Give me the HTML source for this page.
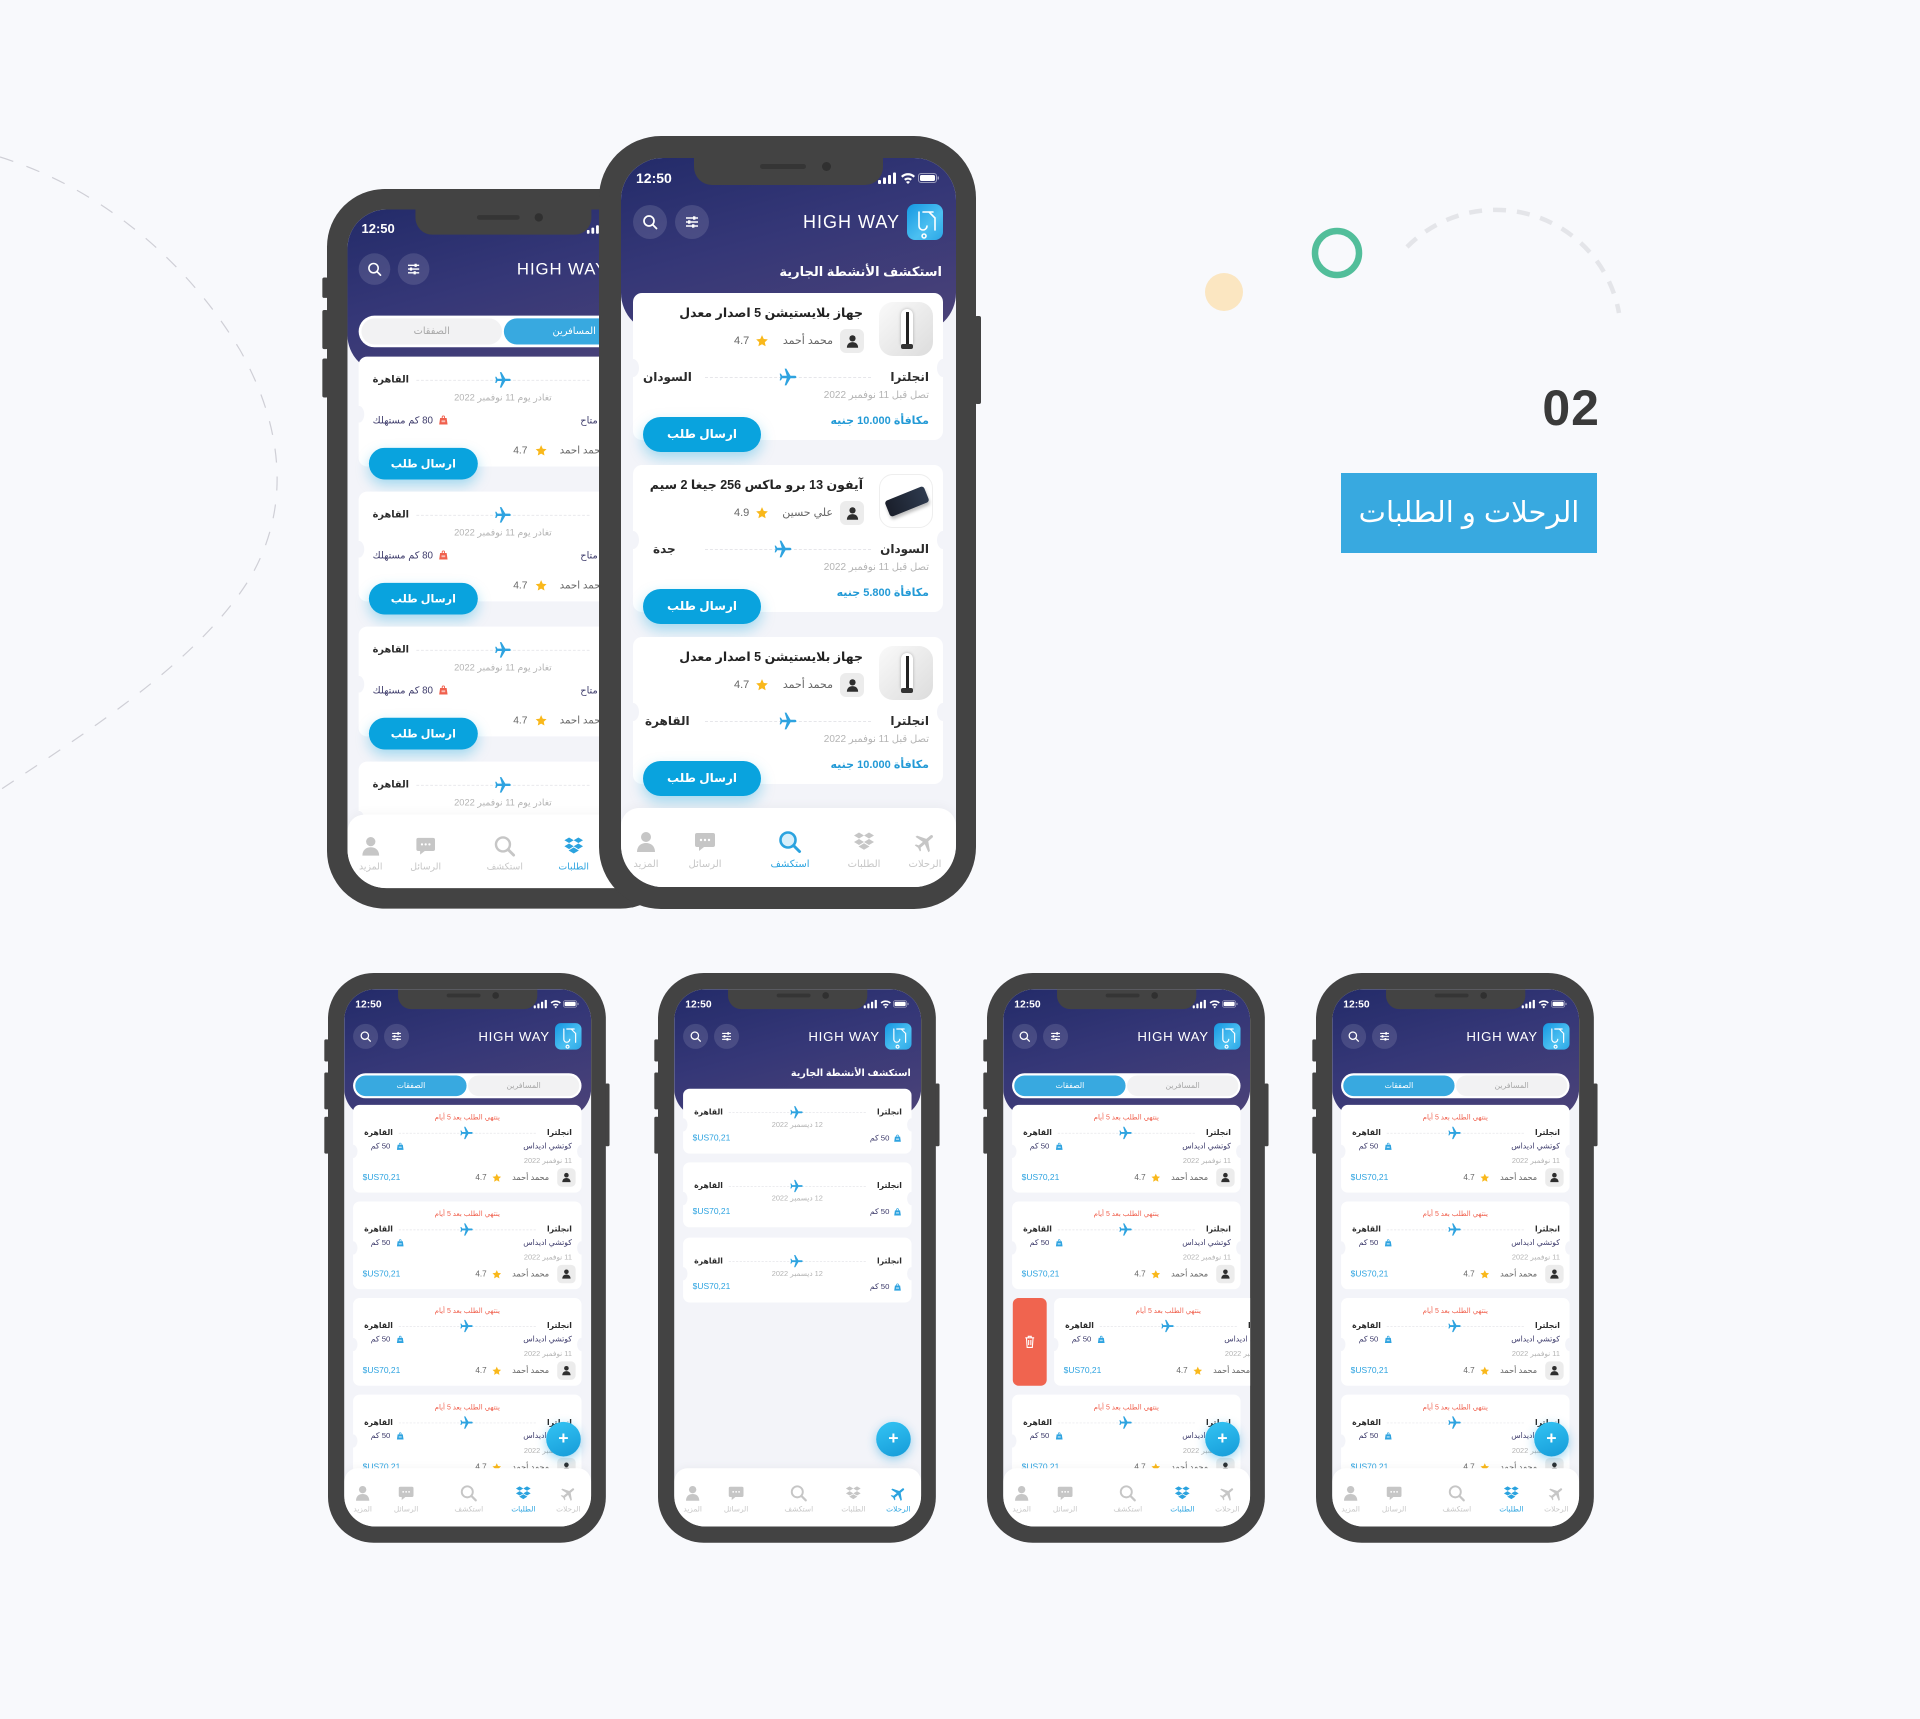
<!DOCTYPE html>
<html><head><meta charset="utf-8">
<style>
*{box-sizing:border-box}
body{margin:0;width:1920px;height:1719px;background:#f8f9fc;position:relative;overflow:hidden;font-family:"Liberation Sans","DejaVu Sans",sans-serif}
.a{position:absolute}
.ph{position:absolute;width:377px;height:773px;transform-origin:0 0}
.bd{position:absolute;inset:0;background:#434343;border-radius:62px}
.sb{position:absolute;background:#434343;border-radius:2px;width:6px}
.scr{position:absolute;left:22px;top:22px;width:335px;height:729px;border-radius:42px;overflow:hidden;background:#f3f4f9}
.hd{position:absolute;left:0;top:0;width:335px;height:175px;background:linear-gradient(165deg,#232b69 0%,#353777 45%,#4c4378 100%);border-radius:0 0 40px 40px}
.notch{position:absolute;left:73px;top:0;width:189px;height:27px;background:#434343;border-radius:0 0 18px 18px}
.notch i{position:absolute;left:66px;top:6px;width:46px;height:5px;border-radius:3px;background:#353535}
.notch b{position:absolute;left:128px;top:4px;width:9px;height:9px;border-radius:50%;background:#303030}
.tm{position:absolute;left:15px;top:12px;color:#fff;font-weight:bold;font-size:14px;line-height:16px}
.stb{position:absolute;left:257px;top:13px;width:62px;height:14px}
.cir{position:absolute;top:47px;width:34px;height:34px;border-radius:50%;background:rgba(255,255,255,.12)}
.cir svg{position:absolute;left:9px;top:9px;width:16px;height:16px}
.hw{position:absolute;right:56px;top:54px;color:#fff;font-size:18px;letter-spacing:1px;line-height:20px;font-weight:500}
.logo{position:absolute;left:286px;top:46px;width:36px;height:36px;border-radius:8px;background:linear-gradient(135deg,#1597e2,#4cc0f1 60%,#2aa6e6)}
.sub{position:absolute;right:14px;top:106px;color:#fff;font-weight:bold;font-size:13px;line-height:16px;direction:rtl}
.cd{position:absolute;left:12px;width:310px;background:#fff;border-radius:9px}
.cd:before,.cd:after{content:"";position:absolute;top:45%;width:12px;height:18px;border-radius:50%;background:#f3f4f9}
.cd:before{left:-6px}.cd:after{right:-6px}
.t{position:absolute;line-height:14px;white-space:nowrap;direction:rtl}
.tt{font-size:12.5px;color:#222;font-weight:bold}
.n{font-size:11px;color:#666}
.b2{font-size:12px;color:#2b2b2b;font-weight:bold}
.b{font-size:10.5px;color:#2b2b2b;font-weight:bold}
.g{font-size:10px;color:#b4b4b4}
.rw{font-size:11px;color:#239ad6;font-weight:bold}
.pu{font-size:10.5px;color:#3d3b6b}
.red{font-size:9.5px;color:#f0604d}
.bl{font-size:11.5px;color:#2da3e0;direction:ltr}
.dl{position:absolute;left:62px;right:62px;border-top:1.5px dashed #e6e6ea}
.pl{position:absolute;width:20px;height:20px;fill:#2ea3e0}
.st{position:absolute;width:14px;height:14px;fill:#f9b81b}
.av{position:absolute;width:25px;height:25px;border-radius:6px;background:#ececec}
.av svg{position:absolute;left:5px;top:5px;width:15px;height:15px;fill:#2e2e2e}
.bag{position:absolute;width:12px;height:12px}
.sbtn{position:absolute;border-radius:18px;background:#09a3de;color:#fff;font-weight:bold;font-size:12px;text-align:center;direction:rtl;box-shadow:0 6px 14px rgba(9,163,222,.35)}
.img{position:absolute;left:246px;top:9px;width:54px;height:54px;border-radius:14px;overflow:hidden}
.tabs{position:absolute;left:12px;top:114px;width:310px;height:34px;background:#fff;border-radius:18px}
.tp{position:absolute;top:3px;height:28px;width:151px;border-radius:15px;text-align:center;line-height:28px;font-size:10.5px;direction:rtl}
.nv{position:absolute;left:0;top:650px;width:335px;height:79px;background:#fff;border-radius:18px 18px 0 0;box-shadow:0 -3px 10px rgba(0,0,0,.03)}
.ni{position:absolute;top:22px;width:60px;margin-left:-30px;text-align:center;color:#c6c6c6;font-size:10px;line-height:12px;direction:rtl}
.ni svg{display:block;margin:0 auto 5px;width:24px;height:24px;fill:currentColor}
.ni.on{color:#2ba3df}
.fab{position:absolute;left:274px;top:587px;width:47px;height:47px;border-radius:50%;background:linear-gradient(160deg,#34c4f4,#159bd8);color:#fff;font-size:24px;font-weight:bold;text-align:center;line-height:46px;box-shadow:0 4px 14px rgba(30,160,220,.45)}
</style></head><body>

<svg width="0" height="0" style="position:absolute">
<defs>
<symbol id="pl" viewBox="0 0 24 24"><path d="M22 12c0-.8-.7-1.5-1.5-1.5H15L10 2H8l2.5 8.5H5L3.5 8H2l1 4-1 4h1.5L5 13.5h5.5L8 22h2l5-8.5h5.5c.8 0 1.5-.7 1.5-1.5z"/></symbol>
<symbol id="st" viewBox="0 0 24 24"><path d="M12 2l3 6.5 7 .8-5.2 4.8 1.4 7L12 17.6 5.8 21.1l1.4-7L2 9.3l7-.8z"/></symbol>
<symbol id="pr" viewBox="0 0 24 24"><circle cx="12" cy="7" r="5"/><path d="M3 22c0-6 4-9 9-9s9 3 9 9z"/></symbol>
<symbol id="ch" viewBox="0 0 24 24"><path d="M4 3h16a2 2 0 0 1 2 2v10a2 2 0 0 1-2 2h-9l-5 4v-4H4a2 2 0 0 1-2-2V5a2 2 0 0 1 2-2z"/><circle cx="8" cy="10" r="1.2" fill="#fff"/><circle cx="12" cy="10" r="1.2" fill="#fff"/><circle cx="16" cy="10" r="1.2" fill="#fff"/></symbol>
<symbol id="se" viewBox="0 0 24 24"><circle cx="10" cy="10" r="7.5" fill="none" stroke="currentColor" stroke-width="2.6"/><path d="M15.5 15.5l6 6" stroke="currentColor" stroke-width="3" stroke-linecap="round"/></symbol>
<symbol id="seA" viewBox="0 0 24 24"><circle cx="10" cy="10" r="7.5" fill="#d8effa" stroke="currentColor" stroke-width="2.6"/><path d="M15.5 15.5l6 6" stroke="currentColor" stroke-width="3" stroke-linecap="round"/></symbol>
<symbol id="bx" viewBox="0 0 24 24"><path d="M7 2.5l5 3-5 3-5-3zM17 2.5l5 3-5 3-5-3zM7 9l5 3-5 3-5-3zM17 9l5 3-5 3-5-3zM6.5 16.5l5.5 3.3 5.5-3.3-5.5-3.3z"/></symbol>
<symbol id="ap" viewBox="0 0 24 24"><g transform="rotate(-40 12 12)"><path d="M22 12c0-.8-.7-1.5-1.5-1.5H15L10 2H8l2.5 8.5H5L3.5 8H2l1 4-1 4h1.5L5 13.5h5.5L8 22h2l5-8.5h5.5c.8 0 1.5-.7 1.5-1.5z"/></g></symbol>
<symbol id="bg" viewBox="0 0 24 24"><path d="M8.5 8V6a3.5 3.5 0 0 1 7 0v2h-2V6a1.5 1.5 0 0 0-3 0v2z"/><path d="M5 8h14l2 14H3z"/><rect x="8" y="13" width="8" height="4" fill="#fff" opacity=".6"/></symbol>
<symbol id="sbar" viewBox="0 0 62 14"><rect x="0" y="9" width="3" height="4" rx="1" fill="#fff"/><rect x="5" y="6.5" width="3" height="6.5" rx="1" fill="#fff"/><rect x="10" y="4" width="3" height="9" rx="1" fill="#fff"/><rect x="15" y="1.5" width="3" height="11.5" rx="1" fill="#fff"/><path d="M23 5a10 10 0 0 1 14 0l-1.6 1.6a7.8 7.8 0 0 0-10.8 0zM26 8a6 6 0 0 1 8 0l-1.6 1.6a3.6 3.6 0 0 0-4.8 0zM30 13l-2-2a2.8 2.8 0 0 1 4 0z" fill="#fff"/><rect x="40.5" y="2.5" width="18" height="9" rx="2.5" fill="none" stroke="#fff" stroke-opacity=".5"/><rect x="42" y="4" width="15" height="6" rx="1.5" fill="#fff"/><rect x="59.5" y="5.5" width="1.5" height="3" fill="#fff" opacity=".5"/></symbol>
<symbol id="srch" viewBox="0 0 16 16"><circle cx="7" cy="7" r="5" fill="none" stroke="#fff" stroke-width="1.7"/><path d="M11 11l3.5 3.5" stroke="#fff" stroke-width="1.8" stroke-linecap="round"/></symbol>
<symbol id="flt" viewBox="0 0 16 16"><path d="M2 4h12M2 8h12M2 12h12" stroke="#fff" stroke-width="1.5"/><rect x="9" y="2.3" width="2.4" height="3.4" fill="#fff"/><rect x="4" y="6.3" width="2.4" height="3.4" fill="#fff"/><rect x="8" y="10.3" width="2.4" height="3.4" fill="#fff"/></symbol>
<symbol id="lg" viewBox="0 0 36 36"><path d="M12 8v14a4 4 0 0 0 8 0M16 8h10M22 8l6 6v12M17 30a2 2 0 1 0 0.1 0" fill="none" stroke="#fff" stroke-width="1.6" stroke-linecap="round"/></symbol>
</defs></svg>

<svg class="a" style="left:0;top:0" width="1920" height="1719">
<path d="M0 157 C90 185 180 250 240 350 C285 430 290 510 250 578 C200 660 90 730 0 790" fill="none" stroke="#cfcfd6" stroke-width="1.2" stroke-dasharray="14 14"/>
<path d="M1407 247 A125 125 0 0 1 1619 313" fill="none" stroke="#e4e5e9" stroke-width="4.5" stroke-dasharray="13 11"/>
<circle cx="1337" cy="253" r="22" fill="none" stroke="#52be9a" stroke-width="6.5"/>
<circle cx="1224" cy="292" r="19" fill="#fbe6c1"/>
</svg>
<div class="a" style="right:320px;top:378px;font-size:50px;color:#3a3a3a;line-height:60px;font-weight:bold;letter-spacing:1px">02</div>
<div class="a" style="left:1341px;top:473px;width:256px;height:80px;background:#38a9e0;color:#fff;font-size:29px;text-align:center;line-height:80px;direction:rtl">الرحلات و الطلبات</div>

<!-- BACK PHONE -->
<div class="ph" style="left:327px;top:189px;transform:scale(0.931)">
<div class="sb" style="left:-5px;top:95px;height:22px"></div>
<div class="sb" style="left:-5px;top:130px;height:42px"></div>
<div class="sb" style="left:-5px;top:182px;height:42px"></div>
<div class="bd"></div>
<div class="scr">
 <div class="hd"></div>
 <div class="tm">12:50</div>
 <svg class="stb"><use href="#sbar"/></svg>
 <div class="cir" style="left:12px"><svg><use href="#srch"/></svg></div>
 <div class="cir" style="left:54px"><svg><use href="#flt"/></svg></div>
 <div class="hw">HIGH WAY</div>
 <div class="logo"><svg width="36" height="36"><use href="#lg"/></svg></div>
 <div class="tabs"><div class="tp" style="left:3px;background:#f2f2f3;color:#a8a8a8">الصفقات</div><div class="tp" style="right:3px;background:#38a9e0;color:#fff">المسافرين</div></div>

 <div class="cd" style="top:158px;height:118px">
  <div class="dl" style="top:25px"></div>
  <div class="t b" style="right:14px;top:18px">انجلترا</div><div class="t b" style="left:15px;top:18px">القاهرة</div>
  <svg class="pl" style="left:145px;top:15px"><use href="#pl"/></svg>
  <div class="t g" style="left:0;right:0;text-align:center;top:38px">تغادر يوم 11 نوفمبر 2022</div>
  <div class="t pu" style="left:15px;top:62px">80 كم مستهلك</div><svg class="bag" style="left:85px;top:62px;fill:#f0604d"><use href="#bg"/></svg>
  <div class="t pu" style="right:14px;top:62px">نوع منتج متاح</div>
  <div class="av" style="right:8px;top:88px"><svg><use href="#pr"/></svg></div>
  <div class="t n" style="right:44px;top:94px">محمد احمد</div>
  <svg class="st" style="left:189px;top:94px"><use href="#st"/></svg><div class="t n" style="left:166px;top:94px">4.7</div>
  <div class="sbtn" style="left:11px;top:98px;width:117px;height:34px;line-height:34px">ارسال طلب</div>
 </div>
 <div class="cd" style="top:303px;height:118px">
  <div class="dl" style="top:25px"></div>
  <div class="t b" style="right:14px;top:18px">انجلترا</div><div class="t b" style="left:15px;top:18px">القاهرة</div>
  <svg class="pl" style="left:145px;top:15px"><use href="#pl"/></svg>
  <div class="t g" style="left:0;right:0;text-align:center;top:38px">تغادر يوم 11 نوفمبر 2022</div>
  <div class="t pu" style="left:15px;top:62px">80 كم مستهلك</div><svg class="bag" style="left:85px;top:62px;fill:#f0604d"><use href="#bg"/></svg>
  <div class="t pu" style="right:14px;top:62px">نوع منتج متاح</div>
  <div class="av" style="right:8px;top:88px"><svg><use href="#pr"/></svg></div>
  <div class="t n" style="right:44px;top:94px">محمد احمد</div>
  <svg class="st" style="left:189px;top:94px"><use href="#st"/></svg><div class="t n" style="left:166px;top:94px">4.7</div>
  <div class="sbtn" style="left:11px;top:98px;width:117px;height:34px;line-height:34px">ارسال طلب</div>
 </div>
 <div class="cd" style="top:448px;height:118px">
  <div class="dl" style="top:25px"></div>
  <div class="t b" style="right:14px;top:18px">انجلترا</div><div class="t b" style="left:15px;top:18px">القاهرة</div>
  <svg class="pl" style="left:145px;top:15px"><use href="#pl"/></svg>
  <div class="t g" style="left:0;right:0;text-align:center;top:38px">تغادر يوم 11 نوفمبر 2022</div>
  <div class="t pu" style="left:15px;top:62px">80 كم مستهلك</div><svg class="bag" style="left:85px;top:62px;fill:#f0604d"><use href="#bg"/></svg>
  <div class="t pu" style="right:14px;top:62px">نوع منتج متاح</div>
  <div class="av" style="right:8px;top:88px"><svg><use href="#pr"/></svg></div>
  <div class="t n" style="right:44px;top:94px">محمد احمد</div>
  <svg class="st" style="left:189px;top:94px"><use href="#st"/></svg><div class="t n" style="left:166px;top:94px">4.7</div>
  <div class="sbtn" style="left:11px;top:98px;width:117px;height:34px;line-height:34px">ارسال طلب</div>
 </div>
 <div class="cd" style="top:593px;height:118px">
  <div class="dl" style="top:25px"></div>
  <div class="t b" style="right:14px;top:18px">انجلترا</div><div class="t b" style="left:15px;top:18px">القاهرة</div>
  <svg class="pl" style="left:145px;top:15px"><use href="#pl"/></svg>
  <div class="t g" style="left:0;right:0;text-align:center;top:38px">تغادر يوم 11 نوفمبر 2022</div>
 </div>
 <div class="nv">
  <div class="ni" style="left:25px"><svg><use href="#pr"/></svg>المزيد</div>
  <div class="ni" style="left:84px"><svg><use href="#ch"/></svg>الرسائل</div>
  <div class="ni" style="left:169px"><svg><use href="#se"/></svg>استكشف</div>
  <div class="ni on" style="left:243px"><svg><use href="#bx"/></svg>الطلبات</div>
  <div class="ni" style="left:304px"><svg><use href="#ap"/></svg>الرحلات</div>
 </div>
 <div class="notch"><i></i><b></b></div>
</div>
</div>

<!-- FRONT PHONE -->
<div class="ph" style="left:599px;top:136px">
<div class="sb" style="left:376px;top:180px;height:88px"></div>
<div class="bd"></div>
<div class="scr">
 <div class="hd"></div>
 <div class="tm">12:50</div>
 <svg class="stb"><use href="#sbar"/></svg>
 <div class="cir" style="left:12px"><svg><use href="#srch"/></svg></div>
 <div class="cir" style="left:54px"><svg><use href="#flt"/></svg></div>
 <div class="hw">HIGH WAY</div>
 <div class="logo"><svg width="36" height="36"><use href="#lg"/></svg></div>
 <div class="sub">استكشف الأنشطة الجارية</div>

 <div class="cd" style="top:135px;height:147px">
  <div class="img" style="background:linear-gradient(135deg,#fafafa,#dcdcdc)"><div class="a" style="left:22px;top:7px;width:12px;height:36px;background:#fff;border-radius:7px 7px 2px 2px;box-shadow:0 0 3px rgba(0,0,0,.25)"></div><div class="a" style="left:27px;top:10px;width:2.5px;height:32px;background:#222"></div><div class="a" style="left:22px;top:42px;width:12px;height:5px;background:#333;border-radius:2px"></div></div>
  <div class="t tt" style="right:80px;top:13px">جهاز بلايستيشن 5 اصدار معدل</div>
  <div class="av" style="left:207px;top:36px;width:24px;height:24px"><svg><use href="#pr"/></svg></div>
  <div class="t n" style="right:110px;top:41px">محمد أحمد</div>
  <svg class="st" style="left:122px;top:41px"><use href="#st"/></svg><div class="t n" style="left:101px;top:41px">4.7</div>
  <div class="dl" style="top:84px;left:72px;right:72px"></div>
  <div class="t b2" style="right:14px;top:77px">انجلترا</div><div class="t b2" style="left:10px;top:77px">السودان</div>
  <svg class="pl" style="left:145px;top:74px"><use href="#pl"/></svg>
  <div class="t g" style="right:14px;top:96px">تصل قبل 11 نوفمبر 2022</div>
  <div class="t rw" style="right:14px;top:121px">مكافأة 10.000 جنيه</div>
  <div class="sbtn" style="left:10px;top:124px;width:118px;height:35px;line-height:35px">ارسال طلب</div>
 </div>
 <div class="cd" style="top:307px;height:147px">
  <div class="img" style="background:#fff;border:1px solid #eee"><div class="a" style="left:6px;top:18px;width:42px;height:17px;background:linear-gradient(90deg,#1a1f2b,#2e3a4e);border-radius:3px;transform:rotate(-22deg);box-shadow:0 3px 3px rgba(0,0,0,.25)"></div></div>
  <div class="t tt" style="right:80px;top:13px">آيفون 13 برو ماكس 256 جيغا 2 سيم</div>
  <div class="av" style="left:207px;top:36px;width:24px;height:24px"><svg><use href="#pr"/></svg></div>
  <div class="t n" style="right:110px;top:41px">علي حسين</div>
  <svg class="st" style="left:122px;top:41px"><use href="#st"/></svg><div class="t n" style="left:101px;top:41px">4.9</div>
  <div class="dl" style="top:84px;left:72px;right:72px"></div>
  <div class="t b2" style="right:14px;top:77px">السودان</div><div class="t b2" style="left:20px;top:77px">جدة</div>
  <svg class="pl" style="left:140px;top:74px"><use href="#pl"/></svg>
  <div class="t g" style="right:14px;top:96px">تصل قبل 11 نوفمبر 2022</div>
  <div class="t rw" style="right:14px;top:121px">مكافأة 5.800 جنيه</div>
  <div class="sbtn" style="left:10px;top:124px;width:118px;height:35px;line-height:35px">ارسال طلب</div>
 </div>
 <div class="cd" style="top:479px;height:147px">
  <div class="img" style="background:linear-gradient(135deg,#fafafa,#dcdcdc)"><div class="a" style="left:22px;top:7px;width:12px;height:36px;background:#fff;border-radius:7px 7px 2px 2px;box-shadow:0 0 3px rgba(0,0,0,.25)"></div><div class="a" style="left:27px;top:10px;width:2.5px;height:32px;background:#222"></div><div class="a" style="left:22px;top:42px;width:12px;height:5px;background:#333;border-radius:2px"></div></div>
  <div class="t tt" style="right:80px;top:13px">جهاز بلايستيشن 5 اصدار معدل</div>
  <div class="av" style="left:207px;top:36px;width:24px;height:24px"><svg><use href="#pr"/></svg></div>
  <div class="t n" style="right:110px;top:41px">محمد أحمد</div>
  <svg class="st" style="left:122px;top:41px"><use href="#st"/></svg><div class="t n" style="left:101px;top:41px">4.7</div>
  <div class="dl" style="top:84px;left:72px;right:72px"></div>
  <div class="t b2" style="right:14px;top:77px">انجلترا</div><div class="t b2" style="left:12px;top:77px">القاهرة</div>
  <svg class="pl" style="left:145px;top:74px"><use href="#pl"/></svg>
  <div class="t g" style="right:14px;top:96px">تصل قبل 11 نوفمبر 2022</div>
  <div class="t rw" style="right:14px;top:121px">مكافأة 10.000 جنيه</div>
  <div class="sbtn" style="left:10px;top:124px;width:118px;height:35px;line-height:35px">ارسال طلب</div>
 </div>
 <div class="nv">
  <div class="ni" style="left:25px"><svg><use href="#pr"/></svg>المزيد</div>
  <div class="ni" style="left:84px"><svg><use href="#ch"/></svg>الرسائل</div>
  <div class="ni on" style="left:169px"><svg><use href="#seA"/></svg>استكشف</div>
  <div class="ni" style="left:243px"><svg><use href="#bx"/></svg>الطلبات</div>
  <div class="ni" style="left:304px"><svg><use href="#ap"/></svg>الرحلات</div>
 </div>
 <div class="notch"><i></i><b></b></div>
</div>
</div>

<!-- SMALL PHONE 1 -->
<div class="ph" style="left:328px;top:973px;transform:scale(0.737)">
<div class="sb" style="left:-5px;top:90px;height:30px"></div><div class="sb" style="left:-5px;top:135px;height:50px"></div><div class="sb" style="left:-5px;top:195px;height:50px"></div><div class="sb" style="left:376px;top:150px;height:85px"></div>
<div class="bd"></div>
<div class="scr">
 <div class="hd"></div>
 <div class="tm">12:50</div><svg class="stb"><use href="#sbar"/></svg>
 <div class="cir" style="left:12px"><svg><use href="#srch"/></svg></div><div class="cir" style="left:54px"><svg><use href="#flt"/></svg></div>
 <div class="hw">HIGH WAY</div><div class="logo"><svg width="36" height="36"><use href="#lg"/></svg></div>
 <div class="tabs"><div class="tp" style="left:3px;background:#38a9e0;color:#fff">الصفقات</div><div class="tp" style="right:3px;background:#f2f2f3;color:#a8a8a8">المسافرين</div></div>
 <div class="cd" style="top:157px;height:119px"><div class="t red" style="left:0;right:0;text-align:center;top:11px">ينتهي الطلب بعد 5 أيام</div><div class="dl" style="top:38px"></div><div class="t b" style="right:13px;top:31px">انجلترا</div><div class="t b" style="left:15px;top:31px">القاهرة</div><svg class="pl" style="left:144px;top:28px"><use href="#pl"/></svg><div class="t pu" style="right:13px;top:49px">كوتشي اديداس</div><div class="t pu" style="left:24px;top:49px">50 كم</div><svg class="bag" style="left:58px;top:50px;fill:#2ea3e0"><use href="#bg"/></svg><div class="t g" style="right:13px;top:70px">11 نوفمبر 2022</div><div class="t bl" style="left:13px;top:92px">$US70,21</div><div class="av" style="right:8px;top:86px"><svg><use href="#pr"/></svg></div><div class="t n" style="right:44px;top:92px">محمد أحمد</div><svg class="st" style="left:188px;top:92px"><use href="#st"/></svg><div class="t n" style="left:166px;top:92px">4.7</div></div>
 <div class="cd" style="top:288px;height:119px"><div class="t red" style="left:0;right:0;text-align:center;top:11px">ينتهي الطلب بعد 5 أيام</div><div class="dl" style="top:38px"></div><div class="t b" style="right:13px;top:31px">انجلترا</div><div class="t b" style="left:15px;top:31px">القاهرة</div><svg class="pl" style="left:144px;top:28px"><use href="#pl"/></svg><div class="t pu" style="right:13px;top:49px">كوتشي اديداس</div><div class="t pu" style="left:24px;top:49px">50 كم</div><svg class="bag" style="left:58px;top:50px;fill:#2ea3e0"><use href="#bg"/></svg><div class="t g" style="right:13px;top:70px">11 نوفمبر 2022</div><div class="t bl" style="left:13px;top:92px">$US70,21</div><div class="av" style="right:8px;top:86px"><svg><use href="#pr"/></svg></div><div class="t n" style="right:44px;top:92px">محمد أحمد</div><svg class="st" style="left:188px;top:92px"><use href="#st"/></svg><div class="t n" style="left:166px;top:92px">4.7</div></div>
 <div class="cd" style="top:419px;height:119px"><div class="t red" style="left:0;right:0;text-align:center;top:11px">ينتهي الطلب بعد 5 أيام</div><div class="dl" style="top:38px"></div><div class="t b" style="right:13px;top:31px">انجلترا</div><div class="t b" style="left:15px;top:31px">القاهرة</div><svg class="pl" style="left:144px;top:28px"><use href="#pl"/></svg><div class="t pu" style="right:13px;top:49px">كوتشي اديداس</div><div class="t pu" style="left:24px;top:49px">50 كم</div><svg class="bag" style="left:58px;top:50px;fill:#2ea3e0"><use href="#bg"/></svg><div class="t g" style="right:13px;top:70px">11 نوفمبر 2022</div><div class="t bl" style="left:13px;top:92px">$US70,21</div><div class="av" style="right:8px;top:86px"><svg><use href="#pr"/></svg></div><div class="t n" style="right:44px;top:92px">محمد أحمد</div><svg class="st" style="left:188px;top:92px"><use href="#st"/></svg><div class="t n" style="left:166px;top:92px">4.7</div></div>
 <div class="cd" style="top:550px;height:119px"><div class="t red" style="left:0;right:0;text-align:center;top:11px">ينتهي الطلب بعد 5 أيام</div><div class="dl" style="top:38px"></div><div class="t b" style="right:13px;top:31px">انجلترا</div><div class="t b" style="left:15px;top:31px">القاهرة</div><svg class="pl" style="left:144px;top:28px"><use href="#pl"/></svg><div class="t pu" style="right:13px;top:49px">كوتشي اديداس</div><div class="t pu" style="left:24px;top:49px">50 كم</div><svg class="bag" style="left:58px;top:50px;fill:#2ea3e0"><use href="#bg"/></svg><div class="t g" style="right:13px;top:70px">11 نوفمبر 2022</div><div class="t bl" style="left:13px;top:92px">$US70,21</div><div class="av" style="right:8px;top:86px"><svg><use href="#pr"/></svg></div><div class="t n" style="right:44px;top:92px">محمد أحمد</div><svg class="st" style="left:188px;top:92px"><use href="#st"/></svg><div class="t n" style="left:166px;top:92px">4.7</div></div>
 <div class="fab">+</div>
 <div class="nv"><div class="ni" style="left:25px"><svg><use href="#pr"/></svg>المزيد</div><div class="ni" style="left:84px"><svg><use href="#ch"/></svg>الرسائل</div><div class="ni" style="left:169px"><svg><use href="#se"/></svg>استكشف</div><div class="ni on" style="left:243px"><svg><use href="#bx"/></svg>الطلبات</div><div class="ni" style="left:304px"><svg><use href="#ap"/></svg>الرحلات</div></div>
 <div class="notch"><i></i><b></b></div>
</div></div>

<!-- SMALL PHONE 2 -->
<div class="ph" style="left:658px;top:973px;transform:scale(0.737)">
<div class="sb" style="left:-5px;top:90px;height:30px"></div><div class="sb" style="left:-5px;top:135px;height:50px"></div><div class="sb" style="left:-5px;top:195px;height:50px"></div><div class="sb" style="left:376px;top:150px;height:85px"></div>
<div class="bd"></div>
<div class="scr">
 <div class="hd"></div>
 <div class="tm">12:50</div><svg class="stb"><use href="#sbar"/></svg>
 <div class="cir" style="left:12px"><svg><use href="#srch"/></svg></div><div class="cir" style="left:54px"><svg><use href="#flt"/></svg></div>
 <div class="hw">HIGH WAY</div><div class="logo"><svg width="36" height="36"><use href="#lg"/></svg></div>
 <div class="sub">استكشف الأنشطة الجارية</div>
 <div class="cd" style="top:135px;height:88px"><div class="dl" style="top:32px"></div><div class="t b" style="right:13px;top:25px">انجلترا</div><div class="t b" style="left:15px;top:25px">القاهرة</div><svg class="pl" style="left:144px;top:22px"><use href="#pl"/></svg><div class="t g" style="left:0;right:0;text-align:center;top:43px">12 ديسمبر 2022</div><div class="t bl" style="left:13px;top:60px">$US70,21</div><svg class="bag" style="right:13px;top:61px;fill:#2ea3e0"><use href="#bg"/></svg><div class="t pu" style="right:30px;top:60px">50 كم</div></div>
 <div class="cd" style="top:235px;height:88px"><div class="dl" style="top:32px"></div><div class="t b" style="right:13px;top:25px">انجلترا</div><div class="t b" style="left:15px;top:25px">القاهرة</div><svg class="pl" style="left:144px;top:22px"><use href="#pl"/></svg><div class="t g" style="left:0;right:0;text-align:center;top:43px">12 ديسمبر 2022</div><div class="t bl" style="left:13px;top:60px">$US70,21</div><svg class="bag" style="right:13px;top:61px;fill:#2ea3e0"><use href="#bg"/></svg><div class="t pu" style="right:30px;top:60px">50 كم</div></div>
 <div class="cd" style="top:337px;height:88px"><div class="dl" style="top:32px"></div><div class="t b" style="right:13px;top:25px">انجلترا</div><div class="t b" style="left:15px;top:25px">القاهرة</div><svg class="pl" style="left:144px;top:22px"><use href="#pl"/></svg><div class="t g" style="left:0;right:0;text-align:center;top:43px">12 ديسمبر 2022</div><div class="t bl" style="left:13px;top:60px">$US70,21</div><svg class="bag" style="right:13px;top:61px;fill:#2ea3e0"><use href="#bg"/></svg><div class="t pu" style="right:30px;top:60px">50 كم</div></div>
 <div class="fab">+</div>
 <div class="nv"><div class="ni" style="left:25px"><svg><use href="#pr"/></svg>المزيد</div><div class="ni" style="left:84px"><svg><use href="#ch"/></svg>الرسائل</div><div class="ni" style="left:169px"><svg><use href="#se"/></svg>استكشف</div><div class="ni" style="left:243px"><svg><use href="#bx"/></svg>الطلبات</div><div class="ni on" style="left:304px"><svg><use href="#ap"/></svg>الرحلات</div></div>
 <div class="notch"><i></i><b></b></div>
</div></div>

<!-- SMALL PHONE 3 -->
<div class="ph" style="left:987px;top:973px;transform:scale(0.737)">
<div class="sb" style="left:-5px;top:90px;height:30px"></div><div class="sb" style="left:-5px;top:135px;height:50px"></div><div class="sb" style="left:-5px;top:195px;height:50px"></div><div class="sb" style="left:376px;top:150px;height:85px"></div>
<div class="bd"></div>
<div class="scr">
 <div class="hd"></div>
 <div class="tm">12:50</div><svg class="stb"><use href="#sbar"/></svg>
 <div class="cir" style="left:12px"><svg><use href="#srch"/></svg></div><div class="cir" style="left:54px"><svg><use href="#flt"/></svg></div>
 <div class="hw">HIGH WAY</div><div class="logo"><svg width="36" height="36"><use href="#lg"/></svg></div>
 <div class="tabs"><div class="tp" style="left:3px;background:#38a9e0;color:#fff">الصفقات</div><div class="tp" style="right:3px;background:#f2f2f3;color:#a8a8a8">المسافرين</div></div>
 <div class="cd" style="top:157px;height:119px"><div class="t red" style="left:0;right:0;text-align:center;top:11px">ينتهي الطلب بعد 5 أيام</div><div class="dl" style="top:38px"></div><div class="t b" style="right:13px;top:31px">انجلترا</div><div class="t b" style="left:15px;top:31px">القاهرة</div><svg class="pl" style="left:144px;top:28px"><use href="#pl"/></svg><div class="t pu" style="right:13px;top:49px">كوتشي اديداس</div><div class="t pu" style="left:24px;top:49px">50 كم</div><svg class="bag" style="left:58px;top:50px;fill:#2ea3e0"><use href="#bg"/></svg><div class="t g" style="right:13px;top:70px">11 نوفمبر 2022</div><div class="t bl" style="left:13px;top:92px">$US70,21</div><div class="av" style="right:8px;top:86px"><svg><use href="#pr"/></svg></div><div class="t n" style="right:44px;top:92px">محمد أحمد</div><svg class="st" style="left:188px;top:92px"><use href="#st"/></svg><div class="t n" style="left:166px;top:92px">4.7</div></div>
 <div class="cd" style="top:288px;height:119px"><div class="t red" style="left:0;right:0;text-align:center;top:11px">ينتهي الطلب بعد 5 أيام</div><div class="dl" style="top:38px"></div><div class="t b" style="right:13px;top:31px">انجلترا</div><div class="t b" style="left:15px;top:31px">القاهرة</div><svg class="pl" style="left:144px;top:28px"><use href="#pl"/></svg><div class="t pu" style="right:13px;top:49px">كوتشي اديداس</div><div class="t pu" style="left:24px;top:49px">50 كم</div><svg class="bag" style="left:58px;top:50px;fill:#2ea3e0"><use href="#bg"/></svg><div class="t g" style="right:13px;top:70px">11 نوفمبر 2022</div><div class="t bl" style="left:13px;top:92px">$US70,21</div><div class="av" style="right:8px;top:86px"><svg><use href="#pr"/></svg></div><div class="t n" style="right:44px;top:92px">محمد أحمد</div><svg class="st" style="left:188px;top:92px"><use href="#st"/></svg><div class="t n" style="left:166px;top:92px">4.7</div></div>
 <div class="a" style="left:13px;top:419px;width:46px;height:119px;background:#f0644f;border-radius:8px"><svg class="a" style="left:15px;top:50px" width="16" height="18" viewBox="0 0 16 18"><path d="M2 4h12M6 4V2h4v2M3.5 4l1 13h7l1-13M6.5 7v7M9.5 7v7" fill="none" stroke="#fff" stroke-width="1.5"/></svg></div>
 <div class="cd" style="top:419px;height:119px;left:69px"><div class="t red" style="left:0;right:0;text-align:center;top:11px">ينتهي الطلب بعد 5 أيام</div><div class="dl" style="top:38px"></div><div class="t b" style="right:13px;top:31px">انجلترا</div><div class="t b" style="left:15px;top:31px">القاهرة</div><svg class="pl" style="left:144px;top:28px"><use href="#pl"/></svg><div class="t pu" style="right:13px;top:49px">كوتشي اديداس</div><div class="t pu" style="left:24px;top:49px">50 كم</div><svg class="bag" style="left:58px;top:50px;fill:#2ea3e0"><use href="#bg"/></svg><div class="t g" style="right:13px;top:70px">11 نوفمبر 2022</div><div class="t bl" style="left:13px;top:92px">$US70,21</div><div class="av" style="right:8px;top:86px"><svg><use href="#pr"/></svg></div><div class="t n" style="right:44px;top:92px">محمد أحمد</div><svg class="st" style="left:188px;top:92px"><use href="#st"/></svg><div class="t n" style="left:166px;top:92px">4.7</div></div>
 <div class="cd" style="top:550px;height:119px"><div class="t red" style="left:0;right:0;text-align:center;top:11px">ينتهي الطلب بعد 5 أيام</div><div class="dl" style="top:38px"></div><div class="t b" style="right:13px;top:31px">انجلترا</div><div class="t b" style="left:15px;top:31px">القاهرة</div><svg class="pl" style="left:144px;top:28px"><use href="#pl"/></svg><div class="t pu" style="right:13px;top:49px">كوتشي اديداس</div><div class="t pu" style="left:24px;top:49px">50 كم</div><svg class="bag" style="left:58px;top:50px;fill:#2ea3e0"><use href="#bg"/></svg><div class="t g" style="right:13px;top:70px">11 نوفمبر 2022</div><div class="t bl" style="left:13px;top:92px">$US70,21</div><div class="av" style="right:8px;top:86px"><svg><use href="#pr"/></svg></div><div class="t n" style="right:44px;top:92px">محمد أحمد</div><svg class="st" style="left:188px;top:92px"><use href="#st"/></svg><div class="t n" style="left:166px;top:92px">4.7</div></div>
 <div class="fab">+</div>
 <div class="nv"><div class="ni" style="left:25px"><svg><use href="#pr"/></svg>المزيد</div><div class="ni" style="left:84px"><svg><use href="#ch"/></svg>الرسائل</div><div class="ni" style="left:169px"><svg><use href="#se"/></svg>استكشف</div><div class="ni on" style="left:243px"><svg><use href="#bx"/></svg>الطلبات</div><div class="ni" style="left:304px"><svg><use href="#ap"/></svg>الرحلات</div></div>
 <div class="notch"><i></i><b></b></div>
</div></div>

<!-- SMALL PHONE 4 -->
<div class="ph" style="left:1316px;top:973px;transform:scale(0.737)">
<div class="sb" style="left:-5px;top:90px;height:30px"></div><div class="sb" style="left:-5px;top:135px;height:50px"></div><div class="sb" style="left:-5px;top:195px;height:50px"></div><div class="sb" style="left:376px;top:150px;height:85px"></div>
<div class="bd"></div>
<div class="scr">
 <div class="hd"></div>
 <div class="tm">12:50</div><svg class="stb"><use href="#sbar"/></svg>
 <div class="cir" style="left:12px"><svg><use href="#srch"/></svg></div><div class="cir" style="left:54px"><svg><use href="#flt"/></svg></div>
 <div class="hw">HIGH WAY</div><div class="logo"><svg width="36" height="36"><use href="#lg"/></svg></div>
 <div class="tabs"><div class="tp" style="left:3px;background:#38a9e0;color:#fff">الصفقات</div><div class="tp" style="right:3px;background:#f2f2f3;color:#a8a8a8">المسافرين</div></div>
 <div class="cd" style="top:157px;height:119px"><div class="t red" style="left:0;right:0;text-align:center;top:11px">ينتهي الطلب بعد 5 أيام</div><div class="dl" style="top:38px"></div><div class="t b" style="right:13px;top:31px">انجلترا</div><div class="t b" style="left:15px;top:31px">القاهرة</div><svg class="pl" style="left:144px;top:28px"><use href="#pl"/></svg><div class="t pu" style="right:13px;top:49px">كوتشي اديداس</div><div class="t pu" style="left:24px;top:49px">50 كم</div><svg class="bag" style="left:58px;top:50px;fill:#2ea3e0"><use href="#bg"/></svg><div class="t g" style="right:13px;top:70px">11 نوفمبر 2022</div><div class="t bl" style="left:13px;top:92px">$US70,21</div><div class="av" style="right:8px;top:86px"><svg><use href="#pr"/></svg></div><div class="t n" style="right:44px;top:92px">محمد أحمد</div><svg class="st" style="left:188px;top:92px"><use href="#st"/></svg><div class="t n" style="left:166px;top:92px">4.7</div></div>
 <div class="cd" style="top:288px;height:119px"><div class="t red" style="left:0;right:0;text-align:center;top:11px">ينتهي الطلب بعد 5 أيام</div><div class="dl" style="top:38px"></div><div class="t b" style="right:13px;top:31px">انجلترا</div><div class="t b" style="left:15px;top:31px">القاهرة</div><svg class="pl" style="left:144px;top:28px"><use href="#pl"/></svg><div class="t pu" style="right:13px;top:49px">كوتشي اديداس</div><div class="t pu" style="left:24px;top:49px">50 كم</div><svg class="bag" style="left:58px;top:50px;fill:#2ea3e0"><use href="#bg"/></svg><div class="t g" style="right:13px;top:70px">11 نوفمبر 2022</div><div class="t bl" style="left:13px;top:92px">$US70,21</div><div class="av" style="right:8px;top:86px"><svg><use href="#pr"/></svg></div><div class="t n" style="right:44px;top:92px">محمد أحمد</div><svg class="st" style="left:188px;top:92px"><use href="#st"/></svg><div class="t n" style="left:166px;top:92px">4.7</div></div>
 <div class="cd" style="top:419px;height:119px"><div class="t red" style="left:0;right:0;text-align:center;top:11px">ينتهي الطلب بعد 5 أيام</div><div class="dl" style="top:38px"></div><div class="t b" style="right:13px;top:31px">انجلترا</div><div class="t b" style="left:15px;top:31px">القاهرة</div><svg class="pl" style="left:144px;top:28px"><use href="#pl"/></svg><div class="t pu" style="right:13px;top:49px">كوتشي اديداس</div><div class="t pu" style="left:24px;top:49px">50 كم</div><svg class="bag" style="left:58px;top:50px;fill:#2ea3e0"><use href="#bg"/></svg><div class="t g" style="right:13px;top:70px">11 نوفمبر 2022</div><div class="t bl" style="left:13px;top:92px">$US70,21</div><div class="av" style="right:8px;top:86px"><svg><use href="#pr"/></svg></div><div class="t n" style="right:44px;top:92px">محمد أحمد</div><svg class="st" style="left:188px;top:92px"><use href="#st"/></svg><div class="t n" style="left:166px;top:92px">4.7</div></div>
 <div class="cd" style="top:550px;height:119px"><div class="t red" style="left:0;right:0;text-align:center;top:11px">ينتهي الطلب بعد 5 أيام</div><div class="dl" style="top:38px"></div><div class="t b" style="right:13px;top:31px">انجلترا</div><div class="t b" style="left:15px;top:31px">القاهرة</div><svg class="pl" style="left:144px;top:28px"><use href="#pl"/></svg><div class="t pu" style="right:13px;top:49px">كوتشي اديداس</div><div class="t pu" style="left:24px;top:49px">50 كم</div><svg class="bag" style="left:58px;top:50px;fill:#2ea3e0"><use href="#bg"/></svg><div class="t g" style="right:13px;top:70px">11 نوفمبر 2022</div><div class="t bl" style="left:13px;top:92px">$US70,21</div><div class="av" style="right:8px;top:86px"><svg><use href="#pr"/></svg></div><div class="t n" style="right:44px;top:92px">محمد أحمد</div><svg class="st" style="left:188px;top:92px"><use href="#st"/></svg><div class="t n" style="left:166px;top:92px">4.7</div></div>
 <div class="fab">+</div>
 <div class="nv"><div class="ni" style="left:25px"><svg><use href="#pr"/></svg>المزيد</div><div class="ni" style="left:84px"><svg><use href="#ch"/></svg>الرسائل</div><div class="ni" style="left:169px"><svg><use href="#se"/></svg>استكشف</div><div class="ni on" style="left:243px"><svg><use href="#bx"/></svg>الطلبات</div><div class="ni" style="left:304px"><svg><use href="#ap"/></svg>الرحلات</div></div>
 <div class="notch"><i></i><b></b></div>
</div></div>

</body></html>
